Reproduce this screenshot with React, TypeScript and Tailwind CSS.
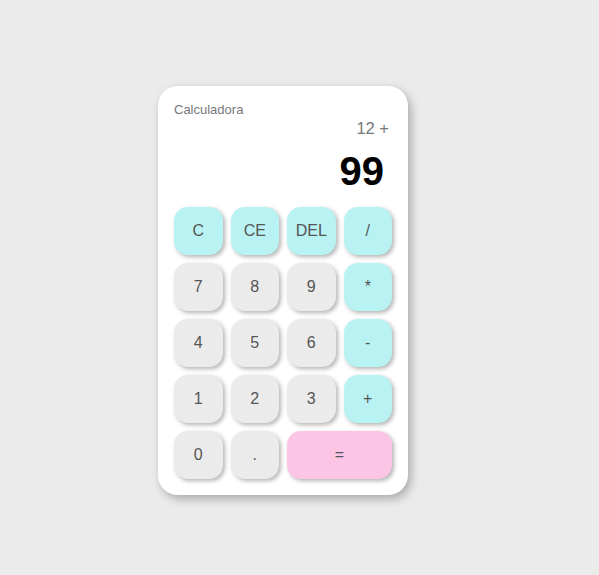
import React from 'react';

type Key = { label: string; kind: 'op' | 'num' | 'eq'; wide?: boolean };

const keys: Key[] = [
  { label: 'C', kind: 'op' },
  { label: 'CE', kind: 'op' },
  { label: 'DEL', kind: 'op' },
  { label: '/', kind: 'op' },
  { label: '7', kind: 'num' },
  { label: '8', kind: 'num' },
  { label: '9', kind: 'num' },
  { label: '*', kind: 'op' },
  { label: '4', kind: 'num' },
  { label: '5', kind: 'num' },
  { label: '6', kind: 'num' },
  { label: '-', kind: 'op' },
  { label: '1', kind: 'num' },
  { label: '2', kind: 'num' },
  { label: '3', kind: 'num' },
  { label: '+', kind: 'op' },
  { label: '0', kind: 'num' },
  { label: '.', kind: 'num' },
  { label: '=', kind: 'eq', wide: true },
];

const bg = {
  op: 'bg-[#b9f2f2]',
  num: 'bg-[#ebebeb]',
  eq: 'bg-[#fdc5e5]',
};

export default function App() {
  return (
    <div className="min-h-[575px] w-full bg-[#ebebeb] font-['Liberation_Sans',Arial,sans-serif]">
      <div className="pt-[86px] pl-[158px]">
        <div className="w-[250px] rounded-[20px] bg-white p-4 shadow-[3px_4px_10px_rgba(0,0,0,0.28)]">
          <div className="text-[13px] leading-[15px] text-[#777]">Calculadora</div>
          <div className="mr-[3px] text-right text-[16.5px] leading-[22px] text-[#777]">12 +</div>
          <div className="mt-2 mr-[8px] text-right text-[40px] leading-[48px] font-bold text-black">99</div>
          <div className="mt-3 grid grid-cols-4 gap-2">
            {keys.map((k) => (
              <button
                key={k.label}
                type="button"
                className={`${bg[k.kind]} ${k.wide ? 'col-span-2' : ''} h-12 rounded-[14px] text-base text-[#555] shadow-[2px_2px_4px_rgba(0,0,0,0.3)]`}
              >
                {k.label}
              </button>
            ))}
          </div>
        </div>
      </div>
    </div>
  );
}
